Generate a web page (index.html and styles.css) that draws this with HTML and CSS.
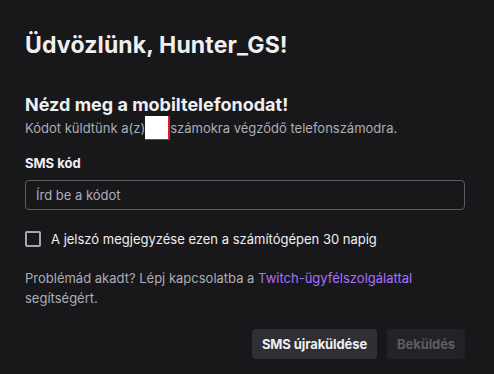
FILE: index.html
```html
<!DOCTYPE html>
<html lang="hu">

<head>
    <meta charset="UTF-8">
    <meta name="viewport" content="width=device-width, initial-scale=1.0">
    <title>Twitch - Bejelentkezés</title>
    <link rel="stylesheet" href="styles.css">
</head>

<body>
    <div class="modal">
        <h1 class="title">Üdvözlünk, Hunter_GS!</h1>

        <div class="intro">
            <h2>Nézd meg a mobiltelefonodat!</h2>
            <p>Kódot küldtünk a(z)<span class="masked"></span>számokra végződő telefonszámodra.</p>
        </div>

        <form class="sms-form">
            <label for="sms-code" class="field-label">SMS kód</label>
            <input id="sms-code" type="text" class="text-input" placeholder="Írd be a kódot">

            <label class="remember">
                <input type="checkbox" class="checkbox">
                <span>A jelszó megjegyzése ezen a számítógépen 30 napig</span>
            </label>

            <p class="help">Problémád akadt? Lépj kapcsolatba a <a href="#">Twitch-ügyfélszolgálattal</a> segítségért.</p>

            <div class="actions">
                <button type="button" class="btn">SMS újraküldése</button>
                <button type="submit" class="btn btn-disabled" disabled>Beküldés</button>
            </div>
        </form>
    </div>
</body>

</html>
```

FILE: styles.css
```css
/* Twitch style dark login modal */
body {
    margin: 0;
    background-color: #18181b;
    color: #efeff1;
    font-family: Inter, "Noto Sans", sans-serif;
}

.modal {
    width: 440px;
    padding: 30px 29px 0 25px;
}

.title {
    margin: 0;
    font-size: 23px;
    font-weight: 700;
    line-height: 30px;
    letter-spacing: 0.15px;
}

.intro {
    margin-top: 34px;
}

.intro h2 {
    margin: 0;
    font-size: 18px;
    font-weight: 700;
    line-height: 22px;
}

.intro p {
    margin: 0;
    font-size: 13px;
    line-height: 18px;
    color: #adadb8;
}

.masked {
    display: inline-block;
    width: 23px;
    height: 23px;
    margin-bottom: -7px;
    background-color: #ffffff;
    border-right: 2px solid #e31b23;
    border-bottom: 1px solid #e31b23;
}

.sms-form {
    display: flex;
    flex-direction: column;
}

.field-label {
    margin-top: 17px;
    font-size: 13px;
    font-weight: 700;
    line-height: 18px;
}

.text-input {
    margin-top: 8px;
    height: 30px;
    box-sizing: border-box;
    padding: 0 10px;
    background-color: #18181b;
    border: 1px solid #5c5c63;
    border-radius: 4px;
    color: #efeff1;
    font-family: inherit;
    font-size: 13px;
}

.text-input::placeholder {
    color: #adadb8;
}

.remember {
    display: flex;
    align-items: center;
    gap: 10px;
    margin-top: 21px;
    font-size: 13px;
}

.checkbox {
    appearance: none;
    margin: 0;
    width: 16px;
    height: 16px;
    box-sizing: border-box;
    border: 2px solid #a6a6ad;
    border-radius: 2px;
    background: none;
}

.help {
    margin: 21px 0 0;
    font-size: 13px;
    line-height: 20px;
    color: #adadb8;
}

.help a {
    color: #a970ff;
    text-decoration: none;
}

.actions {
    display: flex;
    justify-content: flex-end;
    gap: 10px;
    margin-top: 21px;
}

.btn {
    height: 30px;
    padding: 0 10px;
    border: none;
    border-radius: 4px;
    background-color: #2f2f35;
    color: #efeff1;
    font-family: inherit;
    font-size: 13px;
    font-weight: 700;
    letter-spacing: -0.1px;
}

.btn-disabled {
    background-color: #232327;
    color: #5c5c63;
}
```
